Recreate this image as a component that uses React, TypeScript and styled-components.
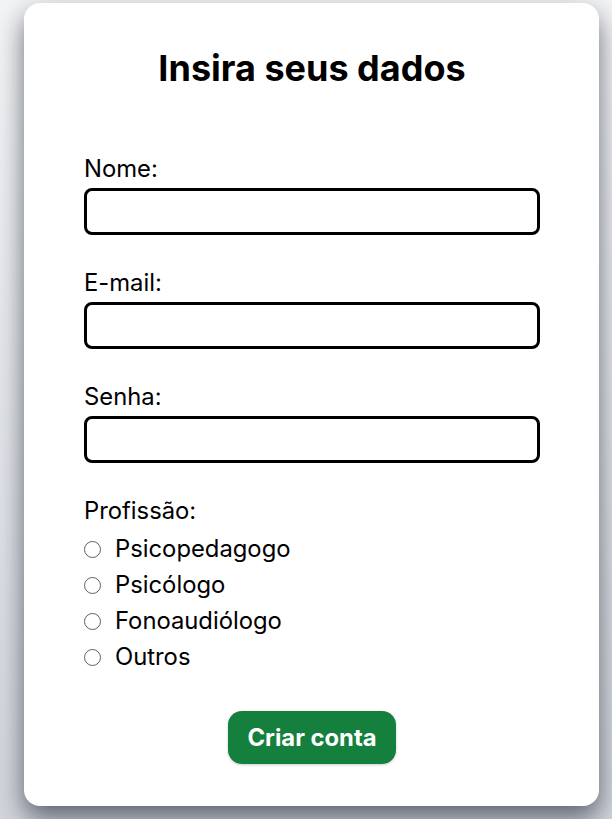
import React from "react";
import styled, { createGlobalStyle } from "styled-components";

const Global = createGlobalStyle`
  html, body {
    margin: 0;
    padding: 0;
  }
  body {
    font-family: Inter, "Noto Sans", sans-serif;
    background: linear-gradient(to bottom, #f3f4f6, #d1d5db);
    min-height: 819px;
  }
  * { box-sizing: border-box; }
`;

const Page = styled.div`
  padding: 3px 13px 13px 24px;
`;

const Card = styled.form`
  background: #ffffff;
  border-radius: 16px;
  box-shadow: 0 12px 26px rgba(17, 24, 39, 0.6);
  height: 803px;
  padding: 45px 59px 0 60px;
  display: flex;
  flex-direction: column;
`;

const Title = styled.h1`
  margin: 0 0 66px;
  font-size: 36px;
  line-height: 40px;
  font-weight: 700;
  text-align: center;
  color: #000;
`;

const Field = styled.div`
  display: flex;
  flex-direction: column;
  margin-bottom: 33px;
`;

const Label = styled.label`
  font-size: 23.8px;
  line-height: 30px;
  color: #000;
  margin-bottom: 4px;
`;

const Input = styled.input`
  height: 47px;
  width: 100%;
  border: 3px solid #000;
  border-radius: 8px;
  background: #fff;
  font: inherit;
  padding: 0 10px;
`;

const Group = styled.fieldset`
  border: 0;
  margin: 0;
  padding: 0;
  display: flex;
  flex-direction: column;
  gap: 6px;
`;

const Legend = styled.div`
  font-size: 23.8px;
  line-height: 30px;
  margin-bottom: 2px;
`;

const Option = styled.label`
  display: flex;
  align-items: center;
  font-size: 23.8px;
  line-height: 30px;
`;

const Radio = styled.input`
  appearance: none;
  -webkit-appearance: none;
  width: 17px;
  height: 17px;
  margin: 0 14px 0 0;
  border: 1.5px solid #5f5f5f;
  border-radius: 50%;
  background: #fff;
  flex: none;

  &:checked {
    border-color: #1a73e8;
    box-shadow: inset 0 0 0 3px #fff;
    background: #1a73e8;
  }
`;

const Actions = styled.div`
  display: flex;
  justify-content: center;
  margin-top: 39px;
`;

const Button = styled.button`
  height: 53px;
  padding: 0 19px;
  border: 0;
  border-radius: 14px;
  background: #15803d;
  color: #fff;
  font-family: Inter, sans-serif;
  font-weight: 700;
  font-size: 23.8px;
  box-shadow: 0 1px 3px rgba(0, 0, 0, 0.2);
`;

const options = ["Psicopedagogo", "Psicólogo", "Fonoaudiólogo", "Outros"];

export default function App() {
  return (
    <>
      <Global />
      <Page>
        <Card onSubmit={(e) => e.preventDefault()}>
          <Title>Insira seus dados</Title>
          <Field>
            <Label htmlFor="nome">Nome:</Label>
            <Input id="nome" type="text" />
          </Field>
          <Field>
            <Label htmlFor="email">E-mail:</Label>
            <Input id="email" type="email" />
          </Field>
          <Field>
            <Label htmlFor="senha">Senha:</Label>
            <Input id="senha" type="password" />
          </Field>
          <Group>
            <Legend>Profissão:</Legend>
            {options.map((o) => (
              <Option key={o}>
                <Radio type="radio" name="profissao" value={o} />
                {o}
              </Option>
            ))}
          </Group>
          <Actions>
            <Button type="submit">Criar conta</Button>
          </Actions>
        </Card>
      </Page>
    </>
  );
}
